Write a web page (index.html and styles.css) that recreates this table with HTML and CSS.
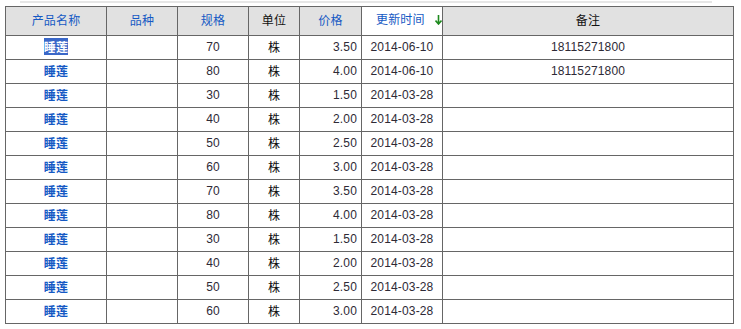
FILE: index.html
```html
<!DOCTYPE html>
<html lang="zh">
<head>
<meta charset="utf-8">
<title>产品列表</title>
<link rel="stylesheet" href="styles.css">
</head>
<body>
<div class="page">
  <div class="topline"></div>
  <table class="grid">
    <colgroup>
      <col class="c1"><col class="c2"><col class="c3"><col class="c4"><col class="c5"><col class="c6"><col class="c7">
    </colgroup>
    <thead>
      <tr>
        <th><a class="hl">产品名称</a></th>
        <th><a class="hl">品种</a></th>
        <th><a class="hl">规格</a></th>
        <th>单位</th>
        <th><a class="hl">价格</a></th>
        <th class="sorted"><a class="hl">更新时间</a><span class="arrow"><svg width="7" height="10" viewBox="0 0 7 10"><path d="M3.5 0v9M0.5 5.5l3 3.5 3-3.5" fill="none" stroke="#1e8a1e" stroke-width="1.6"/></svg></span></th>
        <th>备注</th>
      </tr>
    </thead>
    <tbody>
      <tr><td class="name"><a class="sel">睡莲</a></td><td></td><td class="ctr">70</td><td class="ctr cjk">株</td><td class="rt">3.50</td><td class="ctr">2014-06-10</td><td class="ctr">18115271800</td></tr>
      <tr><td class="name"><a>睡莲</a></td><td></td><td class="ctr">80</td><td class="ctr cjk">株</td><td class="rt">4.00</td><td class="ctr">2014-06-10</td><td class="ctr">18115271800</td></tr>
      <tr><td class="name"><a>睡莲</a></td><td></td><td class="ctr">30</td><td class="ctr cjk">株</td><td class="rt">1.50</td><td class="ctr">2014-03-28</td><td></td></tr>
      <tr><td class="name"><a>睡莲</a></td><td></td><td class="ctr">40</td><td class="ctr cjk">株</td><td class="rt">2.00</td><td class="ctr">2014-03-28</td><td></td></tr>
      <tr><td class="name"><a>睡莲</a></td><td></td><td class="ctr">50</td><td class="ctr cjk">株</td><td class="rt">2.50</td><td class="ctr">2014-03-28</td><td></td></tr>
      <tr><td class="name"><a>睡莲</a></td><td></td><td class="ctr">60</td><td class="ctr cjk">株</td><td class="rt">3.00</td><td class="ctr">2014-03-28</td><td></td></tr>
      <tr><td class="name"><a>睡莲</a></td><td></td><td class="ctr">70</td><td class="ctr cjk">株</td><td class="rt">3.50</td><td class="ctr">2014-03-28</td><td></td></tr>
      <tr><td class="name"><a>睡莲</a></td><td></td><td class="ctr">80</td><td class="ctr cjk">株</td><td class="rt">4.00</td><td class="ctr">2014-03-28</td><td></td></tr>
      <tr><td class="name"><a>睡莲</a></td><td></td><td class="ctr">30</td><td class="ctr cjk">株</td><td class="rt">1.50</td><td class="ctr">2014-03-28</td><td></td></tr>
      <tr><td class="name"><a>睡莲</a></td><td></td><td class="ctr">40</td><td class="ctr cjk">株</td><td class="rt">2.00</td><td class="ctr">2014-03-28</td><td></td></tr>
      <tr><td class="name"><a>睡莲</a></td><td></td><td class="ctr">50</td><td class="ctr cjk">株</td><td class="rt">2.50</td><td class="ctr">2014-03-28</td><td></td></tr>
      <tr><td class="name"><a>睡莲</a></td><td></td><td class="ctr">60</td><td class="ctr cjk">株</td><td class="rt">3.00</td><td class="ctr">2014-03-28</td><td></td></tr>
    </tbody>
  </table>
</div>
</body>
</html>
```
FILE: styles.css
```css
html, body {
  margin: 0;
  padding: 0;
  background: #ffffff;
}
.page {
  padding: 1px 0 0 5px;
  font-family: "Liberation Sans", Arial, "Noto Sans CJK SC", sans-serif;
  font-size: 12px;
  line-height: 14px;
  color: #2e2a36;
}
.topline {
  margin-left: 15px;
  width: 692px;
  height: 2px;
  background: #e6e6e6;
  margin-bottom: 3px;
}
.grid {
  border-collapse: collapse;
  table-layout: fixed;
  width: 729px;
}
.c1 { width: 101px; }
.c2 { width: 71px; }
.c3 { width: 71px; }
.c4 { width: 51px; }
.c5 { width: 62px; }
.c6 { width: 81px; }
.c7 { width: auto; }
.grid th, .grid td {
  border: 1px solid #666666;
  padding: 0 6px;
  white-space: nowrap;
  letter-spacing: 0.15px;
  line-height: 14px;
  box-sizing: border-box;
}
.grid th {
  height: 29px;
  background: #e1e1e1;
  font-weight: normal;
  font-family: "Noto Sans CJK SC", sans-serif;
  font-size: 12px;
  color: #111111;
  text-align: center;
  vertical-align: middle;
  padding-bottom: 3px;
}
.grid th.sorted {
  background: #ffffff;
  padding-left: 14px;
  padding-right: 2px;
}
.grid th .hl {
  color: #1559c4;
}
.arrow {
  display: inline-block;
  margin-left: 10px;
  vertical-align: -1px;
}
.grid td {
  height: 24px;
  vertical-align: middle;
  padding-bottom: 2px;
}
.grid td.name {
  text-align: center;
  font-family: "Noto Sans CJK SC", sans-serif;
  font-weight: bold;
}
.grid td.name a {
  color: #1559c4;
}
.grid td.name a.sel {
  background: #3a67c8;
  color: #ffffff;
}
.ctr { text-align: center; }
.rt { text-align: right; padding-right: 4px !important; }
.cjk { font-family: "Noto Sans CJK SC", sans-serif; color: #111111; }
```
